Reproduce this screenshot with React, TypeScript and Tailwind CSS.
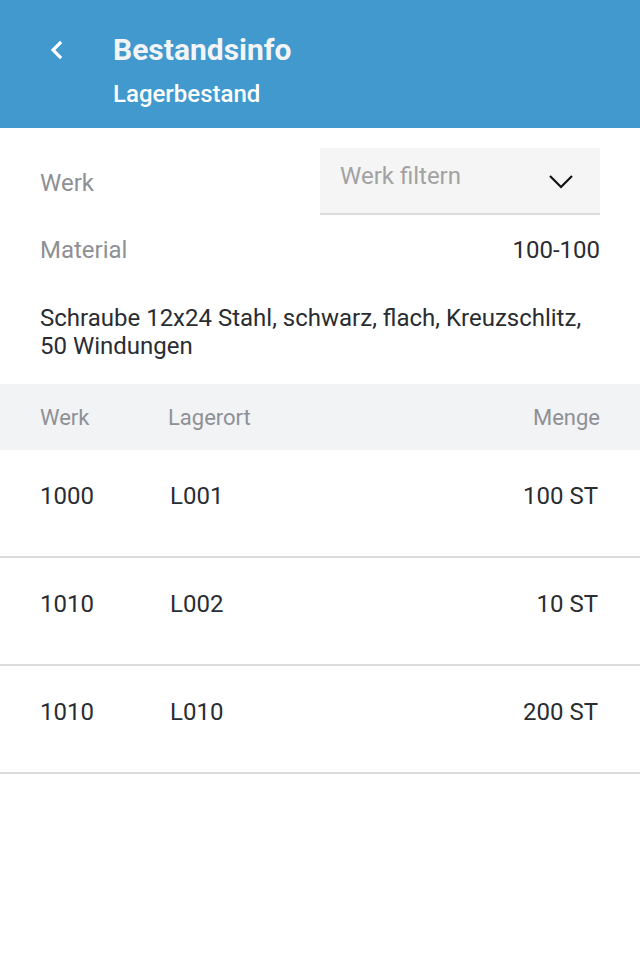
import React from "react";

const rows = [
  { werk: "1000", ort: "L001", menge: "100 ST" },
  { werk: "1010", ort: "L002", menge: "10 ST" },
  { werk: "1010", ort: "L010", menge: "200 ST" },
];

export default function App() {
  return (
    <div className="w-[640px] h-[960px] bg-white" style={{ fontFamily: "Roboto, 'Liberation Sans', sans-serif" }}>
      <div className="h-[128px] bg-[#4199cd] flex">
        <div className="w-[113px] pl-[48px] pt-[40px]">
          <svg width="18" height="20" viewBox="0 0 18 20" fill="none">
            <path d="M12 3 L5 10 L12 17" stroke="white" strokeWidth="3.2" strokeLinecap="square" />
          </svg>
        </div>
        <div className="pt-[32px]">
          <div className="text-[30px] leading-[36px] font-bold text-[#f2f4f6]">Bestandsinfo</div>
          <div className="text-[24px] leading-[28px] font-medium text-white mt-[12px]">Lagerbestand</div>
        </div>
      </div>

      <div className="px-[40px] pt-[20px]">
        <div className="flex items-center justify-between">
          <div className="text-[24px] text-[#8e9096] mt-[2px]">Werk</div>
          <div className="w-[280px] h-[67px] bg-[#f5f5f5] border-b-2 border-[#dddddd] flex items-start justify-between pl-[20px] pr-[26px]">
            <div className="text-[24px] text-[#a2a2a2] pt-[10px]">Werk filtern</div>
            <svg className="mt-[26px]" width="26" height="15" viewBox="0 0 26 15" fill="none">
              <path d="M2 2 L13 13 L24 2" stroke="#111" strokeWidth="2.2" />
            </svg>
          </div>
        </div>
        <div className="flex items-center justify-between mt-[18px] h-[34px]">
          <div className="text-[24px] text-[#8e9096]">Material</div>
          <div className="text-[24px] text-[#2a2d32]">100-100</div>
        </div>
        <div className="text-[24px] leading-[28px] text-[#2a2d32] mt-[37px]">
          Schraube 12x24 Stahl, schwarz, flach, Kreuzschlitz, 50 Windungen
        </div>
      </div>

      <div className="mt-[24px] h-[66px] bg-[#f2f3f4] flex items-center px-[40px] text-[22px] text-[#8e9096]">
        <div className="w-[128px]">Werk</div>
        <div className="flex-1">Lagerort</div>
        <div>Menge</div>
      </div>

      {rows.map((r, i) => (
        <div key={i} className="h-[108px] border-b-2 border-[#dcdcdc] flex items-start pl-[40px] pr-[42px] pt-[32px] text-[24px] leading-[28px] text-[#2a2d32]">
          <div className="w-[130px]">{r.werk}</div>
          <div className="flex-1">{r.ort}</div>
          <div>{r.menge}</div>
        </div>
      ))}
    </div>
  );
}
